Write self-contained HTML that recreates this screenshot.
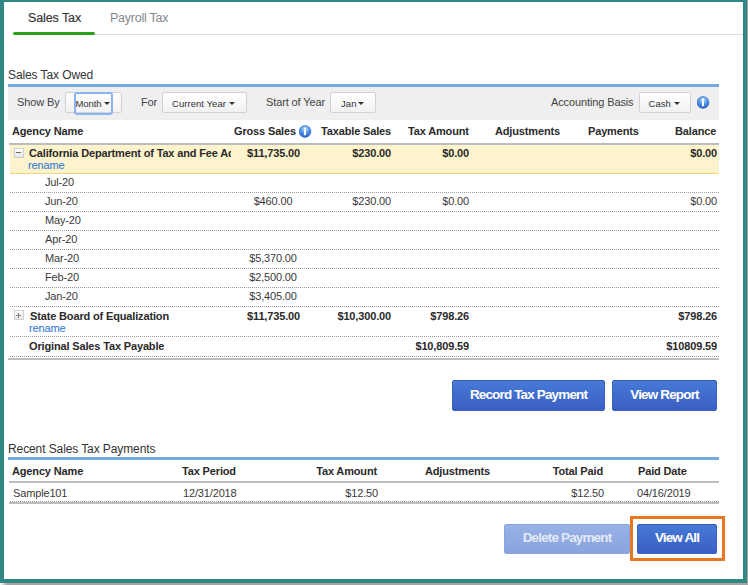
<!DOCTYPE html>
<html><head><meta charset="utf-8">
<style>
*{margin:0;padding:0;box-sizing:border-box}
html,body{width:748px;height:585px;overflow:hidden;background:#fff}
body{position:relative;font-family:"Liberation Sans",sans-serif;color:#3a3a3a}
.a{position:absolute;white-space:nowrap}
.frame{position:absolute;left:0;top:0;width:747px;height:583px;border-left:4px solid #2f8884;border-right:4px solid #2f8884;border-top:2px solid #2f8884;border-bottom:4px solid #2f8884}
.gr{position:absolute;background:#a7a4a2}
.tab{font-size:12.5px;line-height:16px;letter-spacing:-0.1px;-webkit-text-stroke:0.2px currentColor}
.h2{font-size:12px;line-height:15px;color:#333;letter-spacing:-0.1px}
.bar{position:absolute;left:8px;width:711px;height:3px;background:#73abde}
.tb{position:absolute;left:8px;top:87px;width:711px;height:33px;background:#efefef}
.lbl{font-size:11px;line-height:13px;color:#444;letter-spacing:-0.12px}
.sel{position:absolute;height:21px;border:1px solid #d2d2d2;border-radius:2px;background:linear-gradient(#fff,#f1f1f1)}
.st{font-size:9.5px;line-height:12px;color:#333;letter-spacing:0.05px}
.tri{position:absolute;width:0;height:0;border-left:3px solid transparent;border-right:3px solid transparent;border-top:3px solid #333}
.b{font-weight:bold;color:#2a2a2a}
.t11{font-size:11px;line-height:13px;letter-spacing:-0.15px}
.r{text-align:right}
.dot{position:absolute;left:10px;width:709px;height:1px;background-image:linear-gradient(to right,#9a9a9a 50%,transparent 50%);background-size:2px 1px}
.gl{position:absolute;left:9px;width:710px;height:2px;background:#bdbdbd}
.info{position:absolute;width:13px;height:13px;border-radius:50%;background:radial-gradient(circle at 40% 30%,#8cc0f5,#2d73d0 70%,#2a5fb5);}
.info:after{content:"";position:absolute;left:5.5px;top:5px;width:2px;height:5px;background:#fff}
.info:before{content:"";position:absolute;left:5.5px;top:2px;width:2px;height:2px;background:#fff}
.btn{position:absolute;height:31px;border-radius:2px;background:linear-gradient(#467ad7,#3a5ec2);color:#fff;font-weight:bold;font-size:13.5px;letter-spacing:-0.85px;text-align:center;line-height:28px;border:1px solid #3a5fc3}
.link{color:#3a7fdc;-webkit-text-stroke:0.15px currentColor}
</style></head><body>
<div class="frame"></div>
<div class="gr" style="left:747px;top:0;width:1px;height:585px"></div>
<div class="gr" style="left:0;top:583px;width:748px;height:2px;background:linear-gradient(to right,#fff,#a7a4a2 7px)"></div>

<!-- tabs -->
<div class="a tab" style="left:28px;top:10px;color:#393a3d">Sales Tax</div>
<div class="a tab" style="left:110px;top:10px;color:#85878c;-webkit-text-stroke:0;letter-spacing:-0.25px">Payroll Tax</div>
<div class="a" style="left:13px;top:32px;width:82px;height:3px;background:#2ca01c;border-radius:2px"></div>
<div class="a" style="left:95px;top:34px;width:648px;height:1px;background:#dcdde0"></div>

<!-- sales tax owed -->
<div class="a h2" style="left:8px;top:68px">Sales Tax Owed</div>
<div class="bar" style="top:84px"></div>
<div class="tb"></div>
<div class="a lbl" style="left:17px;top:96px">Show By</div>
<div class="sel" style="left:65px;top:92px;width:57px"></div>
<div class="a" style="left:74px;top:92px;width:39px;height:23px;border:2px solid #8ab4f5;border-radius:3px"></div>
<div class="a st" style="left:75.5px;top:98px;letter-spacing:-0.1px">Month</div>
<div class="tri" style="left:104px;top:102px"></div>
<div class="a lbl" style="left:141px;top:96px">For</div>
<div class="sel" style="left:162px;top:92px;width:85px"></div>
<div class="a st" style="left:172px;top:98px">Current Year</div>
<div class="tri" style="left:229px;top:102px"></div>
<div class="a lbl" style="left:266px;top:96px">Start of Year</div>
<div class="sel" style="left:330px;top:92px;width:46px"></div>
<div class="a st" style="left:341px;top:98px">Jan</div>
<div class="tri" style="left:358px;top:102px"></div>
<div class="a lbl" style="left:551px;top:96px">Accounting Basis</div>
<div class="sel" style="left:639px;top:92px;width:52px"></div>
<div class="a st" style="left:648.5px;top:98px">Cash</div>
<div class="tri" style="left:674px;top:102px"></div>
<svg class="a" style="left:697px;top:96px" width="13" height="13" viewBox="0 0 13 13"><defs><radialGradient id="ig697" cx="0.5" cy="0.28" r="0.7"><stop offset="0" stop-color="#c4e4fc"/><stop offset="0.5" stop-color="#5599e6"/><stop offset="1" stop-color="#2a5fc2"/></radialGradient></defs><circle cx="6" cy="6.5" r="5.9" fill="url(#ig697)" stroke="#3674cf" stroke-width="0.7"/><rect x="5" y="2.8" width="2" height="1.7" fill="#fff"/><rect x="5" y="5" width="2" height="5.2" fill="#fff"/></svg>

<!-- header -->
<div class="a t11 b" style="left:12px;top:125px">Agency Name</div>
<div class="a t11 b" style="left:234px;top:125px">Gross Sales</div>
<svg class="a" style="left:299px;top:125px" width="13" height="13" viewBox="0 0 13 13"><defs><radialGradient id="ig299" cx="0.5" cy="0.28" r="0.7"><stop offset="0" stop-color="#c4e4fc"/><stop offset="0.5" stop-color="#5599e6"/><stop offset="1" stop-color="#2a5fc2"/></radialGradient></defs><circle cx="6" cy="6.5" r="5.9" fill="url(#ig299)" stroke="#3674cf" stroke-width="0.7"/><rect x="5" y="2.8" width="2" height="1.7" fill="#fff"/><rect x="5" y="5" width="2" height="5.2" fill="#fff"/></svg>
<div class="a t11 b" style="left:321px;top:125px">Taxable Sales</div>
<div class="a t11 b" style="left:408px;top:125px">Tax Amount</div>
<div class="a t11 b" style="left:495px;top:125px">Adjustments</div>
<div class="a t11 b" style="left:588px;top:125px">Payments</div>
<div class="a t11 b" style="left:675px;top:125px">Balance</div>
<div class="gl" style="top:143px"></div>

<!-- california -->
<div class="a" style="left:10px;top:145px;width:709px;height:29px;background:#fdf3cd;border-bottom:1px solid #f3d57c"></div>
<div class="a" style="left:14px;top:148px;width:10px;height:10px;border:1px solid #cfcfcf;background:linear-gradient(#fff,#e6e6e6)"></div>
<div class="a" style="left:16px;top:152px;width:5px;height:1px;background:#6a6a6a"></div>
<div class="a t11 b" style="left:29px;top:147px;width:202px;overflow:hidden">California Department of Tax and Fee Administration</div>
<div class="a t11 link" style="left:28px;top:159px">rename</div>
<div class="a t11 b r" style="right:448px;top:147px">$11,735.00</div>
<div class="a t11 b r" style="right:357px;top:147px">$230.00</div>
<div class="a t11 b r" style="right:279px;top:147px">$0.00</div>
<div class="a t11 b r" style="right:31px;top:147px">$0.00</div>

<!-- months -->
<div class="a t11" style="left:45px;top:176px">Jul-20</div>
<div class="dot" style="top:192px"></div>
<div class="a t11" style="left:45px;top:195px">Jun-20</div>
<div class="a t11" style="left:223px;width:100px;text-align:center;top:195px">$460.00</div>
<div class="a t11 r" style="right:357px;top:195px">$230.00</div>
<div class="a t11 r" style="right:279px;top:195px">$0.00</div>
<div class="a t11 r" style="right:31px;top:195px">$0.00</div>
<div class="dot" style="top:211px"></div>
<div class="a t11" style="left:45px;top:214px">May-20</div>
<div class="dot" style="top:230px"></div>
<div class="a t11" style="left:45px;top:233px">Apr-20</div>
<div class="dot" style="top:249px"></div>
<div class="a t11" style="left:45px;top:252px">Mar-20</div>
<div class="a t11" style="left:223px;width:100px;text-align:center;top:252px">$5,370.00</div>
<div class="dot" style="top:268px"></div>
<div class="a t11" style="left:45px;top:271px">Feb-20</div>
<div class="a t11" style="left:223px;width:100px;text-align:center;top:271px">$2,500.00</div>
<div class="dot" style="top:287px"></div>
<div class="a t11" style="left:45px;top:290px">Jan-20</div>
<div class="a t11" style="left:223px;width:100px;text-align:center;top:290px">$3,405.00</div>
<div class="dot" style="top:306px"></div>

<!-- state board -->
<div class="a" style="left:14px;top:310px;width:10px;height:10px;border:1px solid #cfcfcf;background:linear-gradient(#fff,#e6e6e6)"></div>
<div class="a" style="left:16px;top:315px;width:5px;height:1px;background:#808080"></div>
<div class="a" style="left:18px;top:313px;width:1px;height:5px;background:#808080"></div>
<div class="a t11 b" style="left:30px;top:310px">State Board of Equalization</div>
<div class="a t11 link" style="left:29px;top:322px">rename</div>
<div class="a t11 b r" style="right:448px;top:310px">$11,735.00</div>
<div class="a t11 b r" style="right:357px;top:310px">$10,300.00</div>
<div class="a t11 b r" style="right:279px;top:310px">$798.26</div>
<div class="a t11 b r" style="right:31px;top:310px">$798.26</div>
<div class="dot" style="top:336px"></div>
<div class="a t11 b" style="left:29px;top:340px">Original Sales Tax Payable</div>
<div class="a t11 b r" style="right:279px;top:340px">$10,809.59</div>
<div class="a t11 b r" style="right:31px;top:340px">$10809.59</div>
<div class="dot" style="top:356px"></div>
<div class="gl" style="top:358px;left:8px;width:711px"></div>

<div class="btn" style="left:452px;top:380px;width:153px">Record Tax Payment</div>
<div class="btn" style="left:612px;top:380px;width:105px">View Report</div>

<!-- recent -->
<div class="a h2" style="left:8px;top:442px">Recent Sales Tax Payments</div>
<div class="bar" style="top:457px"></div>
<div class="a t11 b" style="left:12px;top:465px">Agency Name</div>
<div class="a t11 b" style="left:182px;top:465px">Tax Period</div>
<div class="a t11 b r" style="right:371px;top:465px">Tax Amount</div>
<div class="a t11 b" style="left:425px;top:465px">Adjustments</div>
<div class="a t11 b r" style="right:145px;top:465px">Total Paid</div>
<div class="a t11 b" style="left:638px;top:465px">Paid Date</div>
<div class="gl" style="top:481px"></div>
<div class="a t11" style="left:13px;top:487px">Sample101</div>
<div class="a t11" style="left:183px;top:487px">12/31/2018</div>
<div class="a t11 r" style="right:370px;top:487px">$12.50</div>
<div class="a t11 r" style="right:144px;top:487px">$12.50</div>
<div class="a t11" style="left:637px;top:487px">04/16/2019</div>
<div class="dot" style="top:501px"></div>
<div class="gl" style="top:502px"></div>

<div class="btn" style="left:504px;top:524px;width:126px;height:30px;line-height:26px;background:linear-gradient(#97b2e6,#89a3dd);border-color:#8aa3dc;color:#e2e9f7">Delete Payment</div>
<div class="btn" style="left:637px;top:524px;width:80px;height:30px;line-height:26px">View All</div>
<div class="a" style="left:630px;top:516px;width:95px;height:45px;border:3px solid #e87722"></div>
</body></html>
